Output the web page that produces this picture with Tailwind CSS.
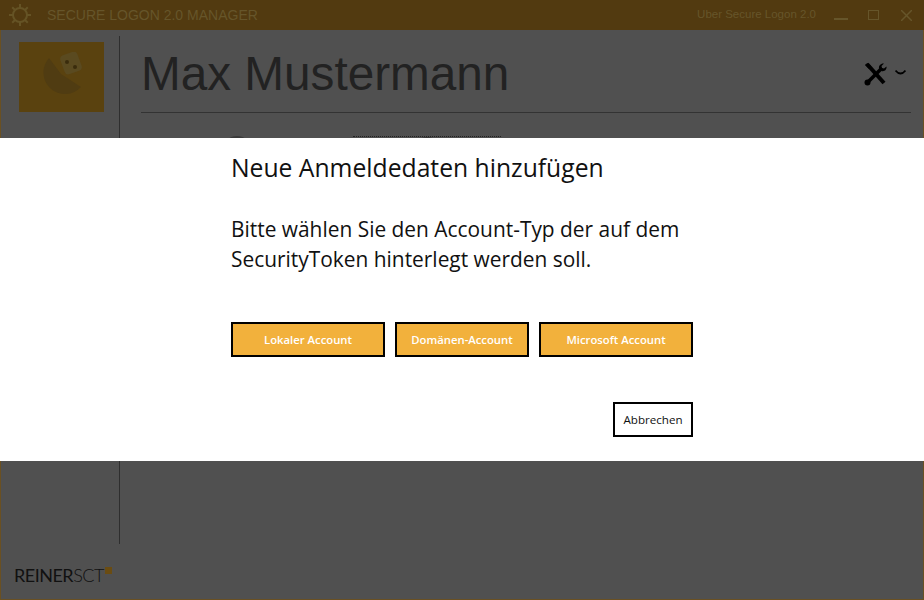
<!DOCTYPE html>
<html lang="de">
<head>
    <meta charset="UTF-8">
    <script src="https://cdn.jsdelivr.net/npm/@tailwindcss/browser@4"></script>
    <title>Secure Logon 2.0 Manager</title>
</head>
<body class="bg-[#505050]">
<div class="relative w-[924px] h-[600px] overflow-hidden bg-[#505050] font-['Open_Sans',sans-serif]">

    <!-- title bar -->
    <div class="flex items-center h-[30px] bg-[#523a10] pl-[8px] pr-[12px] text-[#66552a]">
        <svg class="w-[24px] h-[24px]" viewBox="0 0 24 24" fill="none" stroke="#655325" stroke-width="2">
            <circle cx="12" cy="12" r="7"/>
            <path d="M12 1v4M12 19v4M1 12h4M19 12h4M4.2 4.2l2.8 2.8M17 17l2.8 2.8M4.2 19.8 7 17M17 7l2.8-2.8"/>
        </svg>
        <span class="ml-[15px] text-[14px] font-['Liberation_Sans',sans-serif]">SECURE LOGON 2.0 MANAGER</span>
        <span class="ml-auto text-[11.5px] font-['Liberation_Sans',sans-serif]">Uber Secure Logon 2.0</span>
        <span class="ml-[18px] w-[14px] h-[2px] mt-[8px] bg-[#66552a]"></span>
        <span class="ml-[20px] w-[11px] h-[10px] border border-[#66552a]"></span>
        <svg class="ml-[22px] w-[11px] h-[11px]" viewBox="0 0 11 11" stroke="#66552a" stroke-width="1.5"><path d="M0 0l11 11M11 0 0 11"/></svg>
    </div>

    <!-- main window behind the overlay -->
    <div class="flex h-[570px] border-x border-b border-[#6a5022]">
        <div class="w-[118px] flex flex-col shrink-0">
            <div class="mt-[12px] ml-[18px] w-[85px] h-[70px] bg-[#5a420f] flex items-center justify-center">
                <svg class="w-[46px] h-[50px]" viewBox="0 0 46 50">
                    <path d="M10 6 A21 21 0 1 0 42 35 L22 22Z" fill="#503c12"/>
                    <rect x="23" y="1" width="18" height="20" rx="4" transform="rotate(-20 32 11)" fill="#5a4a20"/>
                    <circle cx="28" cy="10" r="2" fill="#3a2c0c"/>
                    <circle cx="36" cy="15" r="2" fill="#3a2c0c"/>
                </svg>
            </div>
            <div class="mt-auto mb-[14px] ml-[13px] flex items-start">
                <span class="text-[#111111] text-[18px] leading-[20px] tracking-[-0.5px] font-['Lato',sans-serif]">REINER<span class="font-light">SCT</span></span>
                <span class="ml-[1px] mt-[2px] w-[7px] h-[7px] bg-[#6a4c12]"></span>
            </div>
        </div>
        <div class="flex-1 mt-[6px] mb-[55px] border-l border-[#2e2e2e] pl-[21px] pr-[12px]">
            <div class="flex items-start h-[77px] border-b border-[#333333]">
                <h1 class="mt-[8px] text-[47.7px] leading-[60px] text-[#222222] font-['Liberation_Sans',sans-serif]">Max Mustermann</h1>
                <div class="ml-auto mt-[26px] flex items-center gap-[7px] pr-[5px]">
                    <svg class="w-[24px] h-[24px]" viewBox="0 0 24 24" fill="none" stroke="#000000">
                        <path d="M3 2 20 21" stroke-width="4"/>
                        <path d="M4 20 18 6" stroke-width="3.500"/>
                        <path d="M1.500 3 3 1.500l4 3-2 2z" fill="#000000" stroke-width="1"/>
                        <path d="M22.500 4.500c.5 3-2 5.500-5 4.500l-2.500-2.500c-.5-3 2-5.500 5-5l-2.500 2.500.5 2 2 .5z" fill="#000000" stroke-width="0"/>
                        <circle cx="3.500" cy="20.500" r="3" fill="#000000" stroke-width="0"/>
                    </svg>
                    <svg class="w-[11px] h-[7px] mt-[-3px]" viewBox="0 0 11 7" fill="none" stroke="#000000" stroke-width="1.800"><path d="M.5 1.500c3 4 7 4 10 0"/></svg>
                </div>
            </div>
            <div class="flex mt-[23px] items-start">
                <span class="ml-[81px] w-[30px] h-[30px] rounded-full bg-[#3a3a3a]"></span>
                <div class="ml-[101px] w-[148px] flex justify-center border-t border-dotted border-[#222222]">
                    <span class="w-[30px] h-[30px] rounded-full bg-[#3a3a3a]"></span>
                </div>
            </div>
        </div>
    </div>

    <!-- modal dialog -->
    <div class="absolute left-0 right-0 top-[138px] h-[323px] bg-white pl-[231px]">
        <div class="w-[462px]">
            <h2 class="mt-[14px] text-[24.7px] leading-[32px] text-[#111111]">Neue Anmeldedaten hinzufügen</h2>
            <p class="mt-[30px] text-[20.9px] leading-[30px] text-[#111111]">Bitte wählen Sie den Account-Typ der auf dem SecurityToken hinterlegt werden soll.</p>
            <div class="flex justify-between mt-[48px]">
                <button class="w-[154px] h-[35px] pt-px border-2 border-black bg-[#f2b13c] text-white text-[11.3px] font-semibold">Lokaler Account</button>
                <button class="w-[134px] h-[35px] pt-px border-2 border-black bg-[#f2b13c] text-white text-[11.3px] font-semibold">Domänen-Account</button>
                <button class="w-[154px] h-[35px] pt-px border-2 border-black bg-[#f2b13c] text-white text-[11.3px] font-semibold">Microsoft Account</button>
            </div>
            <div class="flex justify-end mt-[45px]">
                <button class="w-[80px] h-[35px] border-2 border-black bg-white text-[#111111] text-[11.6px] font-medium">Abbrechen</button>
            </div>
        </div>
    </div>
</div>
</body>
</html>
